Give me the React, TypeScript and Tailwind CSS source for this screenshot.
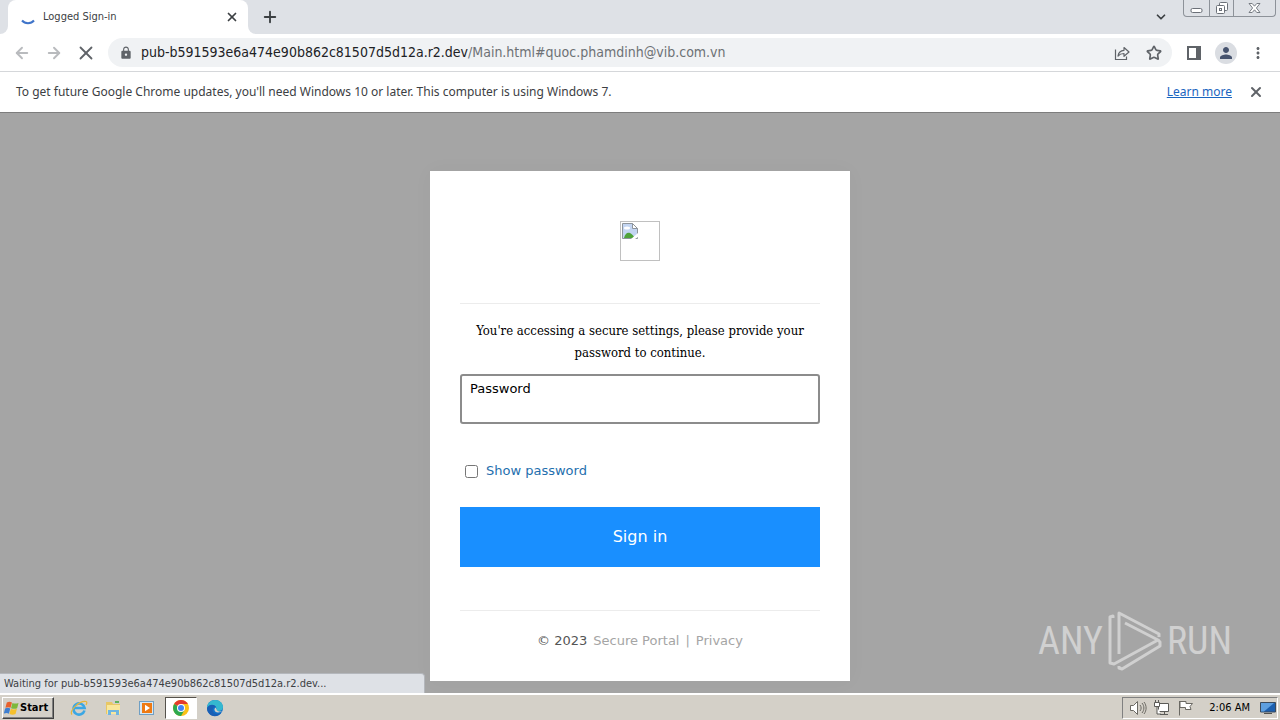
import { useState } from 'react';
import type { FormEvent, ReactNode } from 'react';
import { ArrowLeft, ArrowRight, ChevronDown, Plus, Star, X } from 'lucide-react';
import { MdLock, MdMoreVert, MdPerson } from 'react-icons/md';

function TabStrip() {
  return (
    <div className="flex h-[34px] items-start bg-[#dee1e6] pr-1">
      <div className="flex h-[34px] w-2 bg-white">
        <div className="flex-1 rounded-br-lg bg-[#dee1e6]" />
      </div>
      <div className="flex h-[34px] w-60 items-center rounded-t-lg bg-white pr-[9px] pl-3">
        <svg className="h-4 w-4 shrink-0" viewBox="0 0 16 16" fill="none" stroke="#3f74c9" strokeWidth="2">
          <path d="M2 11.5C5 15 11 15 14 11.5" />
        </svg>
        <span className="ml-[7px] flex-1 font-['DejaVu_Sans_Condensed','DejaVu_Sans',sans-serif] text-[11px] text-[#3c4043]">
          Logged Sign-in
        </span>
        <button aria-label="Close tab" className="text-[#3c4043]">
          <X className="h-3.5 w-3.5" strokeWidth={3} />
        </button>
      </div>
      <div className="flex h-[34px] w-2 bg-white">
        <div className="flex-1 rounded-bl-lg bg-[#dee1e6]" />
      </div>
      <button aria-label="New tab" className="mt-2 ml-[5px] text-[#3c4043]">
        <Plus className="h-[18px] w-[18px]" strokeWidth={2.5} />
      </button>
      <button aria-label="Search tabs" className="mt-2.5 ml-auto text-[#3c4043]">
        <ChevronDown className="h-3.5 w-3.5" strokeWidth={3} />
      </button>
      <div className="ml-[15px] flex h-[17px] rounded-b border border-t-0 border-[#8d9299] text-[#6b7078]">
        <button aria-label="Minimize" className="flex w-[25px] items-center justify-center">
          <svg width="13" height="16" viewBox="0 0 13 16" fill="#fff" stroke="currentColor">
            <rect x="1" y="8.5" width="11" height="4" rx="1.5" />
          </svg>
        </button>
        <button aria-label="Restore" className="flex w-[25px] items-center justify-center border-x border-[#8d9299]">
          <svg width="14" height="16" viewBox="0 0 14 16" fill="#fff" stroke="currentColor">
            <rect x="4.5" y="2.5" width="8" height="8" rx="1" />
            <rect x="1.5" y="5.5" width="8" height="8" rx="1" />
            <rect x="4.5" y="8.5" width="2" height="2" />
          </svg>
        </button>
        <button aria-label="Close" className="flex w-[41px] items-center justify-center">
          <svg width="13" height="16" viewBox="0 0 13 16" fill="#fff" stroke="currentColor" strokeWidth="0.9">
            <path d="M1 3.5h3.2l2.3 2.7 2.3-2.7H12L8.4 8l3.6 4.5H8.8L6.5 9.8l-2.3 2.7H1L4.6 8z" />
          </svg>
        </button>
      </div>
    </div>
  );
}

function Toolbar() {
  return (
    <div className="flex h-[38px] items-center border-b border-[#d5d7da] bg-white px-[13px] text-[#5f6368]">
      <button aria-label="Back" className="text-[#b9bbbe]">
        <ArrowLeft className="h-[18px] w-[18px]" strokeWidth={2.5} />
      </button>
      <button aria-label="Forward" className="ml-3.5 text-[#b9bbbe]">
        <ArrowRight className="h-[18px] w-[18px]" strokeWidth={2.5} />
      </button>
      <button aria-label="Stop loading" className="ml-3">
        <X className="h-[22px] w-[22px]" strokeWidth={2} />
      </button>
      <div className="ml-[11px] flex h-[29px] min-w-0 flex-1 items-center rounded-full bg-[#f0f2f4] pr-2.5 pl-[11px]">
        <MdLock className="h-3.5 w-3.5 shrink-0" />
        <div className="ml-2 min-w-0 flex-1 truncate font-['DejaVu_Sans_Condensed','DejaVu_Sans',sans-serif] text-[14px] text-[#6d7175]">
          <span className="text-[#202124]">pub-b591593e6a474e90b862c81507d5d12a.r2.dev</span>
          /Main.html#quoc.phamdinh@vib.com.vn
        </div>
        <button aria-label="Share this page">
          <svg width="16" height="16" viewBox="0 0 16 16" fill="none" stroke="currentColor" strokeWidth="1.2">
            <path d="M1.5 4.5v10h11v-3" />
            <path d="M4 11c.5-3.5 2.5-5.5 6-5.7V2.5L15 7l-5 4.3V8.500C7.500 8.500 5.500 9.200 4 11z" strokeLinejoin="round" />
          </svg>
        </button>
        <button aria-label="Bookmark this tab" className="ml-4">
          <Star className="h-4 w-4" strokeWidth={2.5} />
        </button>
      </div>
      <button aria-label="Side panel" className="ml-3.5">
        <svg width="16" height="16" viewBox="0 0 16 16" fill="currentColor">
          <path d="M1 1h14v14H1zM3 3v10h7V3z" fillRule="evenodd" />
        </svg>
      </button>
      <button aria-label="Profile" className="ml-[13px] flex h-[22px] w-[22px] items-center justify-center rounded-full bg-[#dadde2] text-[#46536e]">
        <MdPerson className="h-[18px] w-[18px]" />
      </button>
      <button aria-label="Menu" className="ml-3">
        <MdMoreVert className="h-[18px] w-[18px]" />
      </button>
    </div>
  );
}

function InfoBar() {
  return (
    <div className="flex h-[41px] items-center border-b border-[#7d7d7d] bg-white px-4 font-['Noto_Sans',sans-serif] text-[12px] text-[#3c4043]">
      <p className="flex-1">
        To get future Google Chrome updates, you'll need Windows 10 or later. This computer is using Windows 7.
      </p>
      <a href="#learn-more" className="text-[#1a65c0] underline">
        Learn more
      </a>
      <button aria-label="Dismiss" className="ml-4 text-[#5f6368]">
        <X className="h-4 w-4" strokeWidth={3} />
      </button>
    </div>
  );
}

function BrokenImage() {
  return (
    <div role="img" aria-label="Logo" className="mx-auto h-10 w-10 border border-[#c0c0c0] p-px">
      <svg width="16" height="16" viewBox="0 0 16 16">
        <path d="M.5.5h10l5 5v10H.5z" fill="#c3d5f2" stroke="#8e959c" />
        <path d="M10.5.5v5h5z" fill="#fff" stroke="#8e959c" />
        <ellipse cx="5" cy="5" rx="3" ry="1.5" fill="#fff" />
        <path d="M2 15c1-4 3-6 6-5 2 1 4 3 4.5 5z" fill="#4fa33a" />
        <path d="M16 10 9 16h4l3-2z" fill="#fff" />
      </svg>
    </div>
  );
}

function SignInCard() {
  const [password, setPassword] = useState('');
  const [visible, setVisible] = useState(false);

  const handleSubmit = (e: FormEvent) => {
    e.preventDefault();
  };

  return (
    <div className="w-full max-w-[420px] bg-white px-[30px] pt-[50px] pb-[29px] font-['DejaVu_Sans',sans-serif] text-[13px] shadow-[0_0_20px_rgba(0,0,0,0.03)]">
      <BrokenImage />
      <hr className="mt-[42px] border-[#ececec]" />
      <form onSubmit={handleSubmit}>
        <p className="mt-4 text-center font-['DejaVu_Serif_Condensed','DejaVu_Serif',serif] text-[13px] leading-[22px] text-black">
          You're accessing a secure settings, please provide your password to continue.
        </p>
        <input
          type={visible ? 'text' : 'password'}
          aria-label="Password"
          placeholder="Password"
          value={password}
          onChange={(e) => setPassword(e.target.value)}
          className="mt-2.5 block h-[50px] w-full rounded-[3px] border-2 border-[#8c8c8c] px-2 pb-[22px] text-black outline-none placeholder:text-black"
        />
        <label className="mt-9 ml-[5px] flex h-[22px] w-fit items-center gap-2 text-[#1f6fae]">
          <input type="checkbox" checked={visible} onChange={(e) => setVisible(e.target.checked)} className="h-[13px] w-[13px]" />
          Show password
        </label>
        <button type="submit" className="mt-[25px] block h-[60px] w-full bg-[#198fff] text-[16px] text-white">
          Sign in
        </button>
      </form>
      <hr className="mt-[43px] border-[#ececec]" />
      <p className="mt-[19px] flex justify-center gap-1.5 leading-[22px] text-[#a5a5a5]">
        <span className="text-[#555]">© 2023</span>
        <a href="#portal">Secure Portal</a>
        <span>|</span>
        <a href="#privacy">Privacy</a>
      </p>
    </div>
  );
}

function Watermark() {
  return (
    <div className="absolute right-12 bottom-[21px] flex items-center gap-1 font-['Roboto_Condensed','Liberation_Sans_Narrow',sans-serif] text-[38px] leading-[62px] text-[#d0d0d0]">
      <span>ANY</span>
      <svg width="56" height="62" viewBox="0 0 56 62" fill="none" stroke="currentColor" strokeWidth="3" strokeLinejoin="round">
        <path d="M6 8V6L3 7v46l4 1 44-24L18 13" />
        <path d="M12 44V3l40 21v3" />
        <path d="M12 56v2l3 1 38-23v-4l-2-2" />
      </svg>
      <span>RUN</span>
    </div>
  );
}

function TaskItem({ label, active, children }: { label: string; active?: boolean; children: ReactNode }) {
  return (
    <button
      aria-label={label}
      className={
        active
          ? 'flex h-[22px] w-8 items-center justify-center border border-t-[#55524c] border-r-white border-b-white border-l-[#55524c] bg-white'
          : 'flex h-[22px] w-8 items-center justify-center'
      }
    >
      <svg width="18" height="18" viewBox="0 0 18 18">
        {children}
      </svg>
    </button>
  );
}

function Taskbar() {
  return (
    <div className="flex h-7 items-center border-t-2 border-white bg-[#d4d0c8] px-0.5 font-['DejaVu_Sans_Condensed','DejaVu_Sans',sans-serif] text-[11px] text-black">
      <button className="flex h-[22px] w-[52px] items-center gap-px border border-t-white border-r-[#404040] border-b-[#404040] border-l-white pl-px font-bold shadow-[inset_-1px_-1px_0_#808080]">
        <svg width="15" height="15" viewBox="0 0 16 16" className="shrink-0">
          <path d="M3 1.5c2-1 3.500-1 5.500 0L7 7.300c-1.500-1-3.500-1-5.500 0z" fill="#e8612c" />
          <path d="M9 2c2 1 4 1 6.500 0l-1.500 5.600c-2 1-4 1-6.500 0z" fill="#7db83a" />
          <path d="M1.200 8c2-1 3.500-1 5.500 0l-1.500 5.500c-1.500-1-3.500-1-5.500 0z" fill="#3f7fd0" />
          <path d="M7.300 8.300c2 1 4 1 6.500 0l-1.500 5.500c-2 1-4 1-6.500 0z" fill="#f5c02c" />
        </svg>
        Start
      </button>
      <div className="ml-[9px] flex gap-0.5">
        <TaskItem label="Internet Explorer">
          <path d="M14.5 11.5A5.6 5.6 0 1 1 14.6 9H4.5" fill="none" stroke="#3ba7e4" strokeWidth="2.6" />
          <path d="M2 15.5C-1 12 9 1.5 16 2.5c1.5.5.5 2.500 0 3.500" fill="none" stroke="#e6b53a" strokeWidth="1.2" />
        </TaskItem>
        <TaskItem label="File Explorer">
          <path d="M2 3h6l1 2h7v10H2z" fill="#e8c765" />
          <path d="M3 6h13v9H3z" fill="#f9e79c" />
          <path d="M4 16v-5h11v5h-3v-3H7v3z" fill="#6fb5e0" />
          <path d="M11 2h4v2h-4z" fill="#5fb35a" />
        </TaskItem>
        <TaskItem label="Media Player">
          <path d="M1 2h15v14H1z" fill="#6f9fc4" />
          <path d="M2 3h13v12H2z" fill="#d7e7f2" />
          <path d="M4 4h10v10H4z" fill="#ee7a13" />
          <path d="M7 5.8v6.4L12 9z" fill="#fff" />
        </TaskItem>
        <TaskItem label="Google Chrome" active>
          <circle cx="9" cy="9" r="8" fill="#fbc116" />
          <path d="M9 9 2.1 5A8 8 0 0 1 15.9 5H9z" fill="#e33b2e" />
          <path d="M9 9 2.1 5A8 8 0 0 0 9 17l3.5-6z" fill="#2da94f" />
          <circle cx="9" cy="9" r="4" fill="#fff" />
          <circle cx="9" cy="9" r="3" fill="#4285f4" />
        </TaskItem>
        <TaskItem label="Microsoft Edge">
          <circle cx="9" cy="9" r="8" fill="#1271c9" />
          <path d="M1 9C1 4 5 1 9 1c5 0 8 3.5 8 7 0 2.500-2 4-4.500 4-2 0-2.500-1-2-2C11 7 4.500 3.500 1 9z" fill="#35b8cf" />
          <path d="M1 9c2-4 7-4.500 9-1-3-.5-4 2-3 4.500C8 15 12 16 15.500 13.500 13 18 6 18.500 3 14.500 1.500 13 1 11 1 9z" fill="#1a5fb4" />
          <path d="M9.500 8.500c-2 1.500-1 5 2.500 5 2 0 3.500-.5 4.500-1.200-1 .3-6 .7-6-2.300z" fill="#d4d0c8" />
        </TaskItem>
      </div>
      <div className="ml-auto flex h-[22px] items-center border border-t-[#808080] border-r-white border-b-white border-l-[#808080] pr-px pl-1.5">
        <svg width="18" height="18" viewBox="0 0 18 18" fill="#fff" stroke="#6b6963">
          <path d="M1.5 6.5h3l4-4v13l-4-4h-3z" />
          <path d="M11 6c1.5 2 1.5 4 0 6M13 4c2.5 3 2.5 7 0 10M15 3c2.8 3.5 2.8 8.500 0 12" fill="none" />
        </svg>
        <svg className="ml-1.5" width="18" height="18" viewBox="0 0 18 18" fill="#fff" stroke="#5b5a56">
          <path d="M5.5 4.500h10v8h-10zM7 15.500h8M11.500 13v2" />
          <path d="M1.5 3.500h5v4h-5zM2.500 1v2M5.500 1v2M4 8v7h4" />
        </svg>
        <svg className="ml-1.5" width="18" height="18" viewBox="0 0 18 18" fill="#fff" stroke="#6b6963">
          <path d="M2.5 2v14.5" />
          <path d="M3 2.5h6v2h6.500L13 7.500l1 3H8.500v-2H3z" />
        </svg>
        <span className="ml-3.5">2:06 AM</span>
        <svg className="ml-2.5" width="16" height="16" viewBox="0 0 16 16">
          <path d="M.5 2.5h15v9.500H.5z" fill="#1c5fae" stroke="#3a4a5c" />
          <path d="M1 3h13L4 11.500H1z" fill="#5d9fe0" />
          <path d="M4 13.500h8" stroke="#55534e" />
        </svg>
      </div>
    </div>
  );
}

export default function App() {
  return (
    <div className="flex min-h-screen flex-col bg-[#a5a5a5]">
      <TabStrip />
      <Toolbar />
      <InfoBar />
      <main className="relative flex flex-1 flex-col items-center bg-[#a5a5a5] pt-[58px] pb-3">
        <SignInCard />
        <Watermark />
        <div className="absolute bottom-0 left-0 h-5 w-[425px] truncate rounded-tr border-t border-r border-[#b4b7bc] bg-[#dee1e6] pl-1 font-['DejaVu_Sans_Condensed','DejaVu_Sans',sans-serif] text-[11px] leading-[20px] text-[#3c4043]">
          Waiting for pub-b591593e6a474e90b862c81507d5d12a.r2.dev...
        </div>
      </main>
      <Taskbar />
    </div>
  );
}
